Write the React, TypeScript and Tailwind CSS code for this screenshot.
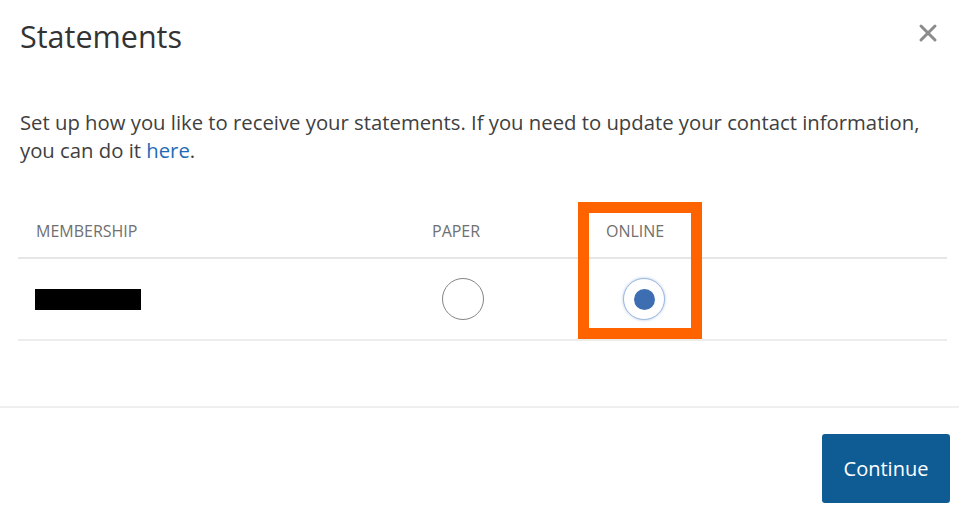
import { useState } from "react";

function CloseIcon() {
  return (
    <svg width="20" height="20" viewBox="0 0 20 20" className="text-[#8c8c8c]">
      <path d="M3 3 L17 17 M17 3 L3 17" stroke="currentColor" strokeWidth="3" strokeLinecap="round" />
    </svg>
  );
}

function Radio({ checked, onClick }: { checked: boolean; onClick: () => void }) {
  return (
    <button
      onClick={onClick}
      className={`flex h-[42px] w-[42px] items-center justify-center rounded-full bg-white ${
        checked
          ? "border-[1.5px] border-[#9cb9de] shadow-[0_0_3px_rgba(80,130,200,0.45)]"
          : "border-[1.5px] border-[#858585]"
      }`}
    >
      {checked && <span className="h-[21px] w-[21px] rounded-full bg-[#3d6eb1]" />}
    </button>
  );
}

export default function App() {
  const [choice, setChoice] = useState<"paper" | "online">("online");

  return (
    <div className="flex h-[521px] w-[959px] flex-col bg-white font-['Open_Sans',sans-serif] text-[#333]">
      <div className="flex items-start justify-between pl-[20px] pr-[21px] pt-[17px]">
        <h1 className="text-[30.5px] leading-[38px] text-[#333]">Statements</h1>
        <button className="mt-[6px]">
          <CloseIcon />
        </button>
      </div>

      <p className="mt-[53px] px-[20px] text-[20.3px] leading-[28px] text-[#404040]">
        Set up how you like to receive your statements. If you need to update your contact information,
        you can do it <a className="text-[#1f6bb5]">here</a>.
      </p>

      <div className="relative ml-[18px] mr-[12px] mt-[38px]">
        <div className="grid grid-cols-[397px_163px_124px_1fr] border-b-2 border-[#e6e6e6] text-[16px] uppercase text-[#707070]">
          <div className="pl-[18px] pt-[17px] pb-[14px]">Membership</div>
          <div className="pl-[17px] pt-[17px]">Paper</div>
          <div className="pl-[28px] pt-[17px]">Online</div>
          <div />
        </div>
        <div className="grid h-[82px] grid-cols-[397px_163px_124px_1fr] items-center border-b-2 border-[#ececec]">
          <div className="pl-[17px]">
            <div className="h-[21px] w-[106px] bg-black" />
          </div>
          <div className="pl-[27px]">
            <Radio checked={choice === "paper"} onClick={() => setChoice("paper")} />
          </div>
          <div className="pl-[45px]">
            <Radio checked={choice === "online"} onClick={() => setChoice("online")} />
          </div>
          <div />
        </div>
        <div className="pointer-events-none absolute left-[560px] top-0 h-[137px] w-[124px] border-[11px] border-[#ff6300]" />
      </div>

      <div className="mt-[65px] h-[2px] w-full bg-[#efefef]" />

      <div className="flex justify-end pr-[9px] pt-[26px]">
        <button className="h-[69px] w-[128px] rounded-[3px] bg-[#0f5c95] text-[20px] text-white">Continue</button>
      </div>
    </div>
  );
}
